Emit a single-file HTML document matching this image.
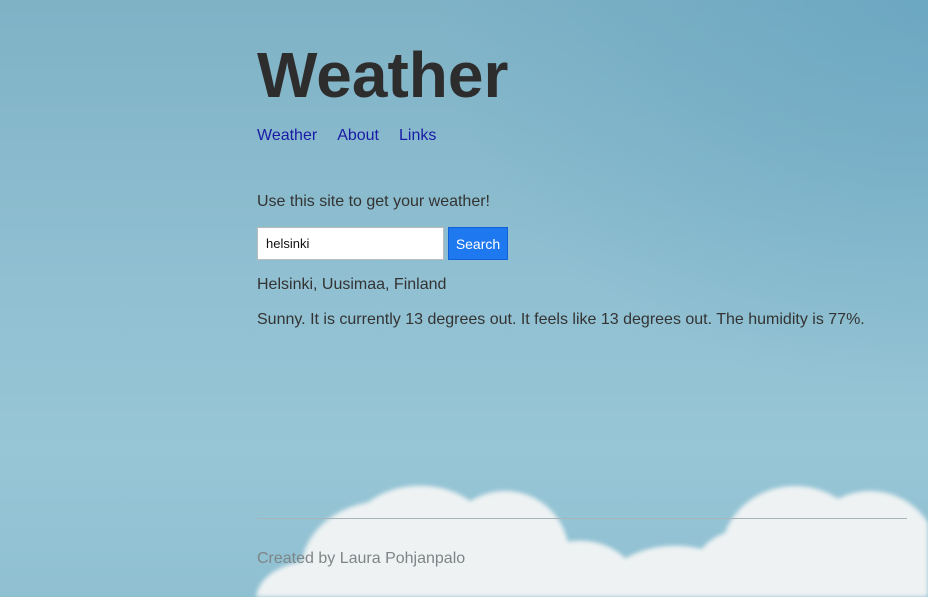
<!DOCTYPE html>
<html><head><meta charset="utf-8"><style>
html,body{margin:0;padding:0;width:928px;height:597px;overflow:hidden}
#root{width:928px;height:597px;overflow:hidden;position:relative;font-family:"Liberation Sans",Arial,sans-serif;
background:linear-gradient(180deg,#7fb2c6 0%,#8fbfd1 45%,#97c6d6 75%,#8fc0d2 100%);}
.tr{position:absolute;right:0;top:0;width:500px;height:400px;background:radial-gradient(ellipse at top right,rgba(95,160,190,.6),rgba(95,160,190,0) 70%)}
.cl{position:absolute;left:0;top:0;width:928px;height:597px;background:
radial-gradient(ellipse 85px 70px at 385px 570px,#eef2f3 97%,rgba(238,242,243,0) 100%),
radial-gradient(ellipse 70px 50px at 420px 535px,#eef2f3 97%,rgba(238,242,243,0) 100%),
radial-gradient(ellipse 65px 65px at 505px 555px,#eef2f3 97%,rgba(238,242,243,0) 100%),
radial-gradient(ellipse 60px 40px at 315px 600px,#eef2f3 97%,rgba(238,242,243,0) 100%),
radial-gradient(ellipse 60px 50px at 580px 590px,#eef2f3 97%,rgba(238,242,243,0) 100%),
radial-gradient(ellipse 75px 50px at 675px 595px,#eef2f3 97%,rgba(238,242,243,0) 100%),
radial-gradient(ellipse 75px 70px at 795px 555px,#eef2f3 97%,rgba(238,242,243,0) 100%),
radial-gradient(ellipse 70px 70px at 870px 560px,#eef2f3 97%,rgba(238,242,243,0) 100%),
radial-gradient(ellipse 50px 50px at 740px 580px,#eef2f3 97%,rgba(238,242,243,0) 100%);filter:blur(2px)}
.wrap{position:absolute;left:257px;top:0;width:650px;height:597px}
h1{position:absolute;top:38px;left:0;margin:0;font-size:64px;font-weight:bold;color:#2d2d2d}
nav{position:absolute;top:127px;left:0;font-size:16px}
nav a{color:#1a1aa6;text-decoration:none;margin-right:20px}
.p{position:absolute;left:0;font-size:16px;color:#333}
input{position:absolute;top:227px;left:0;width:187px;height:33px;box-sizing:border-box;border:1px solid #bbb;padding:0 8px;font-size:13px;font-family:inherit;color:#111;background:#fff}
button{position:absolute;top:227px;left:191px;width:60px;height:33px;background:#1e78f0;color:#fff;border:1px solid #1060d8;font-size:14px;font-family:inherit;padding:0}
hr{position:absolute;top:518px;left:0;width:650px;margin:0;border:0;border-top:1px solid #a8b4b8}
.f{position:absolute;top:550px;left:0;font-size:16px;color:#7f8587}
</style></head><body><div id="root">
<div class="tr"></div>
<div class="cl"></div>
<div class="wrap">
<h1>Weather</h1>
<nav><a>Weather</a><a>About</a><a>Links</a></nav>
<div class="p" style="top:193px">Use this site to get your weather!</div>
<input value="helsinki"><button>Search</button>
<div class="p" style="top:276px">Helsinki, Uusimaa, Finland</div>
<div class="p" style="top:311px">Sunny. It is currently 13 degrees out. It feels like 13 degrees out. The humidity is 77%.</div>
<hr>
<div class="f">Created by Laura Pohjanpalo</div>
</div>
</div></body></html>
